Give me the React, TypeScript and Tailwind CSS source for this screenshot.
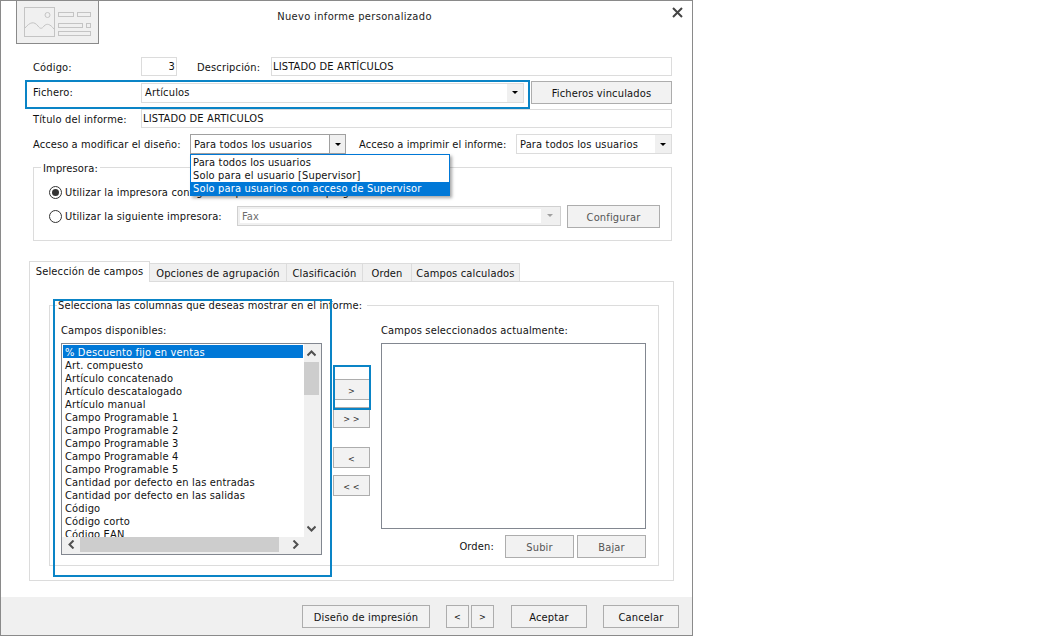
import type { ReactNode } from 'react';

const FIELDS = [
  '% Descuento fijo en ventas',
  'Art. compuesto',
  'Artículo concatenado',
  'Artículo descatalogado',
  'Artículo manual',
  'Campo Programable 1',
  'Campo Programable 2',
  'Campo Programable 3',
  'Campo Programable 4',
  'Campo Programable 5',
  'Cantidad por defecto en las entradas',
  'Cantidad por defecto en las salidas',
  'Código',
  'Código corto',
  'Código EAN',
];

const TABS = [
  { label: 'Opciones de agrupación', width: 'w-[137px]' },
  { label: 'Clasificación', width: 'w-[76px]' },
  { label: 'Orden', width: 'w-[49px]' },
  { label: 'Campos calculados', width: 'w-[108px]' },
];

function Arrow({ color = '#000000' }: { color?: string }) {
  return (
    <svg width="6" height="3" viewBox="0 0 6 3" className="block">
      <path d="M0 0h6L3 3z" fill={color} />
    </svg>
  );
}

function Chevron({ d }: { d: string }) {
  return (
    <svg width="9" height="9" viewBox="0 0 9 9" className="block">
      <path d={d} fill="none" stroke="#505050" strokeWidth="2" />
    </svg>
  );
}

function Button({ className, children }: { className: string; children: ReactNode }) {
  return (
    <div className={`flex shrink-0 items-center justify-center border border-[#adadad] bg-[#f2f2f2] pt-[1px] ${className}`}>
      {children}
    </div>
  );
}

function Combo({ className, text, open }: { className: string; text: string; open?: boolean }) {
  return (
    <div className={`flex items-stretch border bg-white ${open ? 'border-[#a0a0a0]' : 'border-[#dcdcdc]'} ${className}`}>
      <span className="flex-1 pl-[3px] leading-[19px]">{text}</span>
      <div className={`flex w-[16px] items-center justify-center bg-[#f0f0f0] ${open ? 'border-l border-[#a0a0a0]' : ''}`}>
        <Arrow />
      </div>
    </div>
  );
}

function Radio({ checked }: { checked?: boolean }) {
  return (
    <div className="flex h-[13px] w-[13px] shrink-0 items-center justify-center rounded-full border border-[#333333] bg-white">
      {checked && <div className="h-[7px] w-[7px] rounded-full bg-[#333333]" />}
    </div>
  );
}

function SmallButton({ label, className }: { label: string; className: string }) {
  return (
    <Button className={`h-[21px] w-[37px] pt-[3px] text-[9px] text-[#333333] ${className}`}>{label}</Button>
  );
}

export default function App() {
  return (
    <div className="h-[636px] w-[1044px] overflow-hidden bg-white font-['DejaVu_Sans_Condensed','DejaVu_Sans',sans-serif] text-[11px] leading-[13px] tracking-[0.16px] text-[#111111]">
      <div className="relative flex h-[636px] w-[693px] flex-col border border-[#8a8a8a]">
        {/* Title bar */}
        <div className="flex h-[56px] shrink-0 items-start">
          <div className="ml-[15px] h-[43px] w-[83px] shrink-0 border border-t-0 border-[#8a8a8a] bg-[#f0f0f0]">
            <svg width="81" height="42" viewBox="0 0 81 42" className="block" fill="none" stroke="#c4c4c4">
              <rect x="7.5" y="6.5" width="30" height="29" />
              <circle cx="30.5" cy="14" r="2.5" />
              <path d="M8 27c5-6 9-7 13-2 2 3 4 3 6 0 3-3 6-2 10 3" />
              <rect x="41.5" y="11.5" width="15" height="4" />
              <rect x="60.5" y="11.5" width="13" height="4" />
              <rect x="41.5" y="22.5" width="24" height="4" />
              <rect x="69.5" y="22.5" width="4" height="4" />
              <rect x="41.5" y="30.5" width="32" height="4" />
            </svg>
          </div>
          <div className="flex-1 pt-[9px] pr-[62px] text-center tracking-[0.35px] text-[#222222]">Nuevo informe personalizado</div>
          <svg width="11" height="11" viewBox="0 0 11 11" className="mt-[6px] mr-[9px]">
            <path d="M1 1l9 9M10 1l-9 9" stroke="#444444" strokeWidth="2" fill="none" />
          </svg>
        </div>

        {/* Report header fields */}
        <div className="flex h-[19px] shrink-0 items-stretch pr-[20px] pl-[32px]">
          <span className="mt-[4px] w-[108px]">Código:</span>
          <div className="w-[36px] border border-[#dcdcdc] pr-[1px] text-right leading-[17px]">3</div>
          <span className="mt-[4px] ml-[20px] w-[74px]">Descripción:</span>
          <div className="flex-1 border border-[#dcdcdc] pl-[1px] leading-[17px]">LISTADO DE ARTÍCULOS</div>
        </div>

        <div className="mt-[5px] flex h-[23px] shrink-0 items-center pr-[20px] pl-[32px]">
          <span className="w-[108px]">Fichero:</span>
          <div className="flex h-[20px] w-[383px] items-stretch border border-[#dcdcdc]">
            <span className="flex-1 pl-[3px] leading-[17px]">Artículos</span>
            <div className="flex w-[16px] items-center justify-center bg-[#f0f0f0]">
              <Arrow />
            </div>
          </div>
          <Button className="ml-[7px] h-[23px] flex-1">Ficheros vinculados</Button>
        </div>

        <div className="mt-[5px] flex h-[19px] shrink-0 items-stretch pr-[20px] pl-[32px]">
          <span className="mt-[4px] w-[108px]">Título del informe:</span>
          <div className="flex-1 border border-[#dcdcdc] pl-[1px] leading-[17px]">LISTADO DE ARTICULOS</div>
        </div>

        <div className="mt-[6px] flex h-[20px] shrink-0 items-center pr-[20px] pl-[32px]">
          <span className="w-[157px] tracking-[0.1px]">Acceso a modificar el diseño:</span>
          <Combo className="h-[20px] w-[156px]" text="Para todos los usuarios" open />
          <span className="ml-[13px] w-[157px] tracking-[0.06px]">Acceso a imprimir el informe:</span>
          <Combo className="h-[20px] flex-1" text="Para todos los usuarios" />
        </div>

        {/* Printer group */}
        <div className="relative mt-[13px] mr-[20px] ml-[32px] h-[74px] shrink-0 border border-[#dcdcdc] pl-[15px]">
          <span className="absolute top-[-6px] left-[7px] bg-white px-[2px]">Impresora:</span>
          <div className="mt-[18px] flex h-[13px] items-center gap-[3px]">
            <Radio checked />
            <span>Utilizar la impresora configurada por defecto en el programa</span>
          </div>
          <div className="mt-[6px] flex h-[23px] items-center">
            <Radio />
            <span className="ml-[3px] w-[172px]">Utilizar la siguiente impresora:</span>
            <div className="mb-[2px] flex h-[20px] w-[324px] items-stretch border border-[#d0d0d0] bg-[#f0f0f0] p-[2px] text-[#6d6d6d]">
              <span className="flex-1 bg-white pl-[2px] leading-[15px]">Fax</span>
              <div className="flex w-[17px] items-center justify-center">
                <Arrow color="#a0a0a0" />
              </div>
            </div>
            <Button className="ml-[6px] h-[23px] w-[93px] text-[#555555]">Configurar</Button>
          </div>
        </div>

        {/* Tab strip */}
        <div className="mt-[19px] flex h-[21px] shrink-0 items-end pl-[28px]">
          <div className="relative z-10 mb-[-1px] flex h-[21px] w-[121px] items-center justify-center border border-b-0 border-[#dcdcdc] bg-white pb-[2px]">
            Selección de campos
          </div>
          {TABS.map((tab) => (
            <div
              key={tab.label}
              className={`flex h-[18px] items-center justify-center border border-b-0 border-l-0 border-[#dcdcdc] bg-[#f0f0f0] pt-[2px] ${tab.width}`}
            >
              {tab.label}
            </div>
          ))}
        </div>

        {/* Tab page */}
        <div className="mr-[18px] ml-[28px] h-[300px] shrink-0 border border-[#dcdcdc] pt-[23px] pr-[14px] pl-[19px]">
          <div className="relative flex h-[261px] border border-[#dcdcdc] pt-[18px] pl-[11px]">
            <span className="absolute top-[-7px] left-[7px] bg-white pr-[5px] pl-[1px]">
              Selecciona las columnas que deseas mostrar en el informe:
            </span>

            <div className="flex w-[261px] shrink-0 flex-col">
              <span className="h-[19px]">Campos disponibles:</span>
              <div className="relative h-[212px] overflow-hidden border border-[#828790] pl-[1px]">
                <div className="flex h-[193px] flex-col overflow-hidden pt-[1px] pr-[18px]">
                  {FIELDS.map((field, index) => (
                    <div
                      key={field}
                      className={`h-[13px] shrink-0 pl-[2px] leading-[15px] ${index === 0 ? 'bg-[#0078d7] text-white' : ''}`}
                    >
                      {field}
                    </div>
                  ))}
                </div>
                {/* Vertical scrollbar */}
                <div className="absolute top-0 right-0 flex h-[193px] w-[17px] flex-col bg-[#f0f0f0]">
                  <div className="flex h-[18px] w-[15px] items-center justify-center">
                    <Chevron d="M.5 6.5l4-4 4 4" />
                  </div>
                  <div className="h-[33px] w-[15px] bg-[#cdcdcd]" />
                  <div className="flex-1" />
                  <div className="flex h-[17px] w-[15px] items-center justify-center">
                    <Chevron d="M.5 2.5l4 4 4-4" />
                  </div>
                </div>
                {/* Horizontal scrollbar */}
                <div className="absolute right-0 bottom-0 left-0 flex h-[17px] items-start bg-[#f0f0f0] pr-[17px]">
                  <div className="flex h-[15px] w-[18px] items-center justify-center">
                    <Chevron d="M6.5.5l-4 4 4 4" />
                  </div>
                  <div className="h-[15px] w-[199px] bg-[#cdcdcd]" />
                  <div className="flex-1" />
                  <div className="flex h-[15px] w-[17px] items-center justify-center">
                    <Chevron d="M2.5.5l4 4-4 4" />
                  </div>
                </div>
              </div>
            </div>

            <div className="ml-[11px] flex w-[37px] shrink-0 flex-col pt-[55px]">
              <SmallButton label=">" className="" />
              <SmallButton label="> >" className="mt-[7px]" />
              <SmallButton label="<" className="mt-[19px]" />
              <SmallButton label="< <" className="mt-[7px]" />
            </div>

            <div className="ml-[11px] flex w-[265px] shrink-0 flex-col">
              <span className="h-[19px]">Campos seleccionados actualmente:</span>
              <div className="h-[186px] border border-[#828790]" />
              <div className="mt-[6px] flex items-center justify-end">
                <span className="mr-[11px]">Orden:</span>
                <Button className="h-[23px] w-[69px] text-[#555555]">Subir</Button>
                <Button className="ml-[3px] h-[23px] w-[69px] text-[#555555]">Bajar</Button>
              </div>
            </div>
          </div>
        </div>

        {/* Dialog buttons */}
        <div className="mt-[16px] flex flex-1 items-center justify-end bg-[#f0f0f0] pt-[1px] pr-[13px]">
          <Button className="h-[23px] w-[128px]">Diseño de impresión</Button>
          <Button className="ml-[16px] h-[23px] w-[23px] text-[9px]">&lt;</Button>
          <Button className="ml-[2px] h-[23px] w-[23px] text-[9px]">&gt;</Button>
          <Button className="ml-[17px] h-[23px] w-[76px]">Aceptar</Button>
          <Button className="ml-[16px] h-[23px] w-[76px]">Cancelar</Button>
        </div>

        {/* Open access dropdown */}
        <div className="absolute top-[153px] left-[189px] z-20 h-[42px] w-[260px] border border-[#0078d7] bg-white pt-[1px] shadow-[2px_2px_3px_rgba(0,0,0,0.35)]">
          <div className="h-[13px] pl-[2px]">Para todos los usuarios</div>
          <div className="h-[13px] pl-[2px]">Solo para el usuario [Supervisor]</div>
          <div className="h-[13px] bg-[#0078d7] pl-[2px] text-white">Solo para usuarios con acceso de Supervisor</div>
        </div>

        {/* Callout frames */}
        <div className="absolute top-[79px] left-[24px] z-30 h-[29px] w-[505px] border-2 border-[#0a84c6]" />
        <div className="absolute top-[298px] left-[52px] z-30 h-[278px] w-[279px] border-2 border-[#0a84c6]" />
        <div className="absolute top-[364px] left-[332px] z-30 h-[45px] w-[38px] border-2 border-[#0a84c6]" />
      </div>
    </div>
  );
}
